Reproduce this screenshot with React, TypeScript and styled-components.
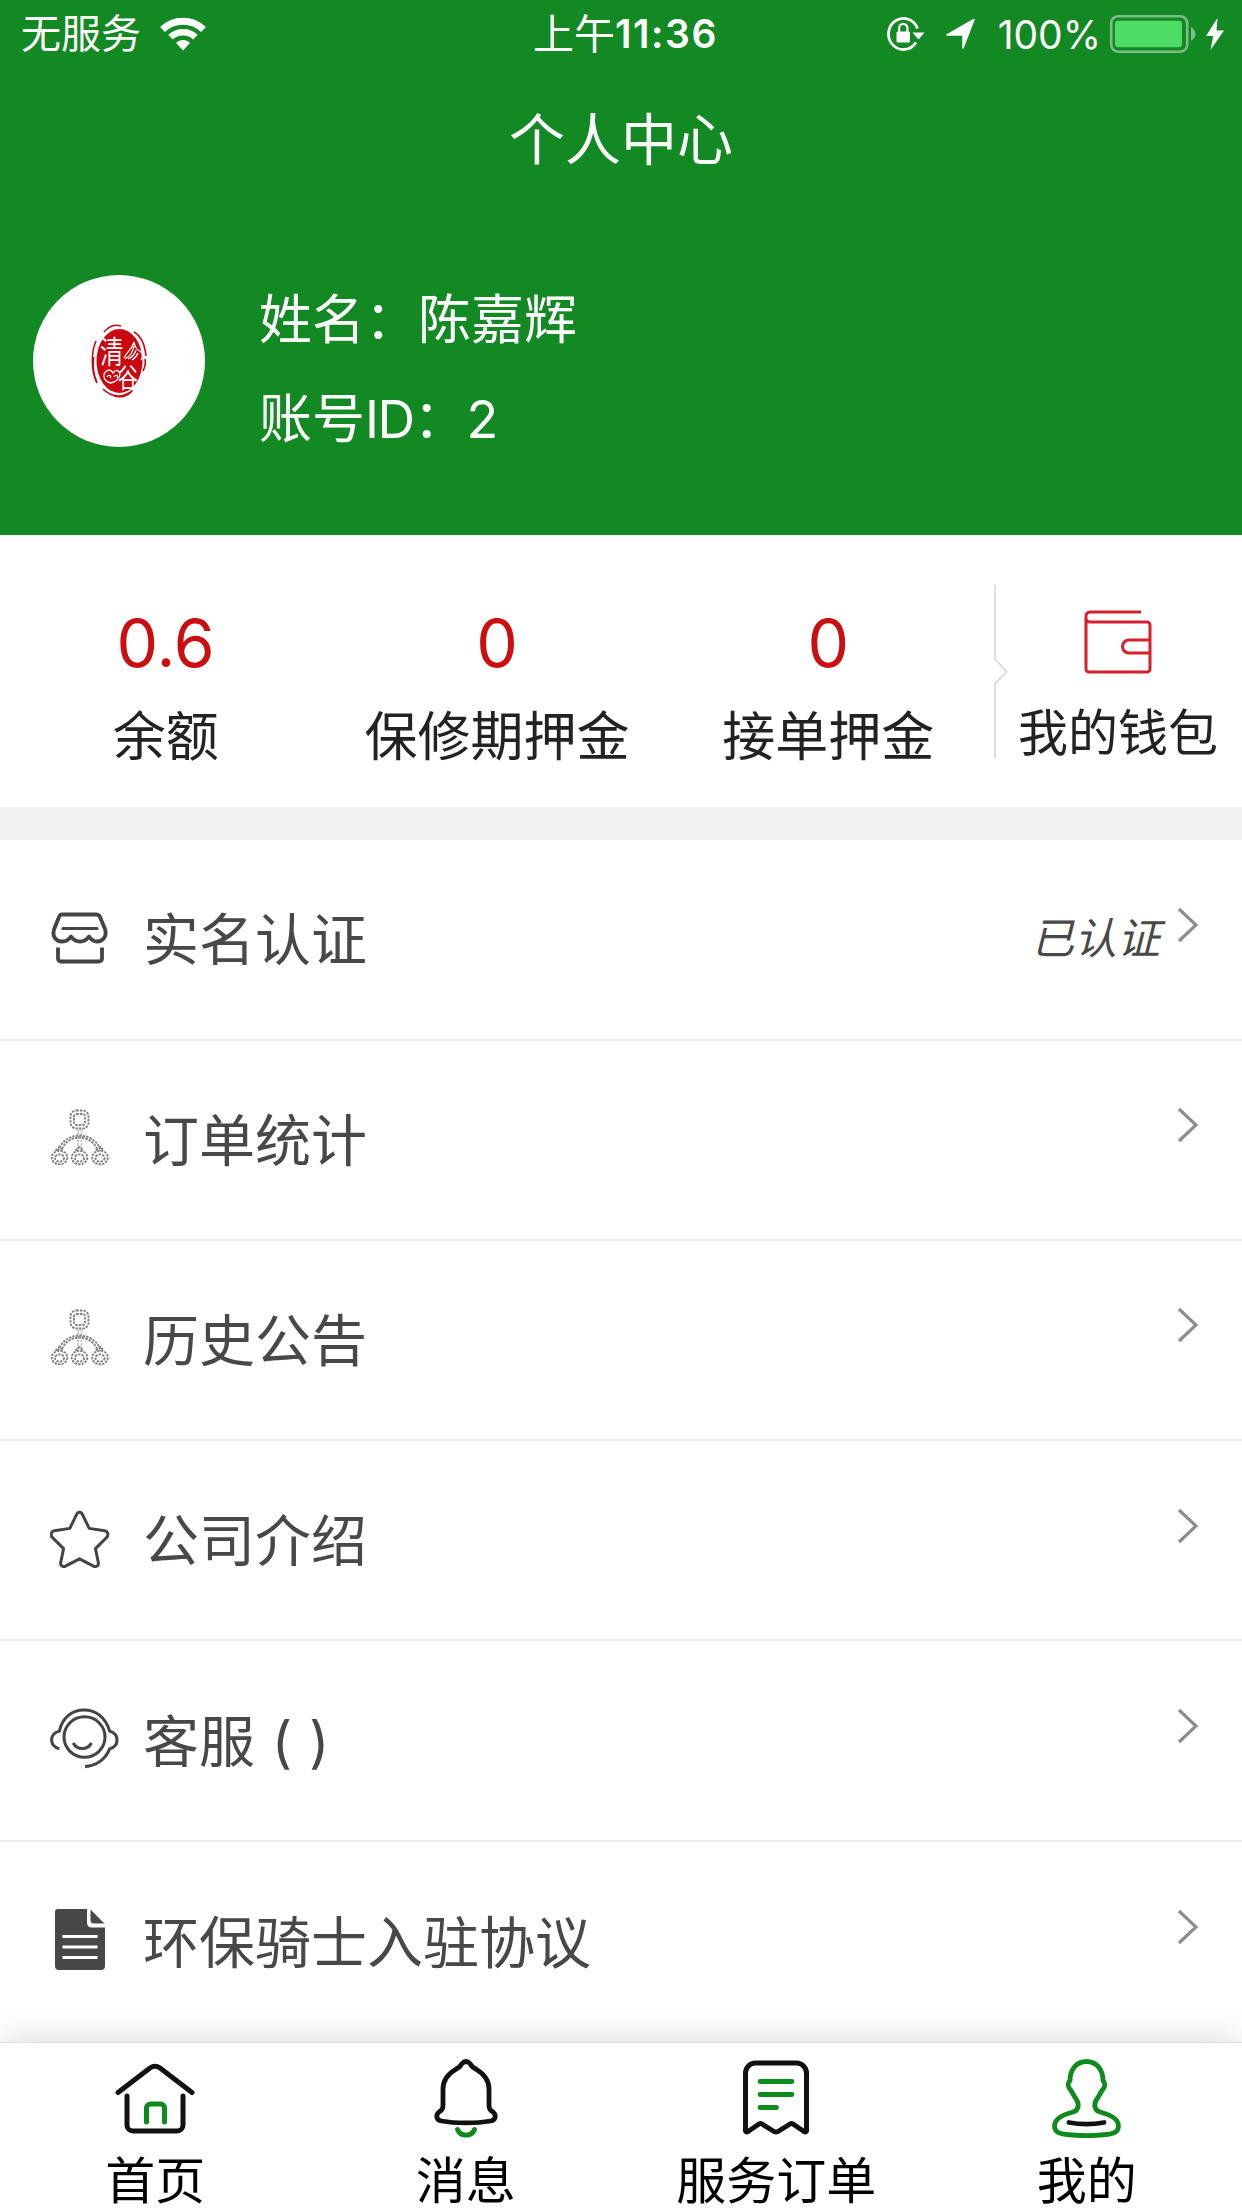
import type { ReactNode } from "react";
import styled, { createGlobalStyle } from "styled-components";

type Asset = {
  value: string;
  label: string;
};

type MenuItem = {
  icon: ReactNode;
  title: string;
  status?: string;
};

type Tab = {
  icon: ReactNode;
  label: string;
};

const GREEN = "#128922";
const TAB_GREEN = "#0f8a1c";

const WifiIcon = () => (
  <svg width="48" height="36" viewBox="0 0 48 36" fill="none" stroke="#fff">
    <path d="M3.5 13.5C15 2.4 33 2.4 44.5 13.5" strokeWidth="7" />
    <path d="M11.5 21.2C18.5 14.6 29.5 14.6 36.5 21.2" strokeWidth="6.5" />
    <path d="M17 27c4-4 10-4 14 0l-7 7.5z" fill="#fff" stroke="none" />
  </svg>
);

const LockIcon = () => (
  <svg width="40" height="36" viewBox="0 0 40 36" fill="none" stroke="#fff">
    <path d="M31.5 12.5A15 15.5 0 1 0 30 26.5" strokeWidth="2.8" />
    <path d="M26.5 16.5h12l-6 7z" fill="#fff" stroke="none" />
    <rect x="10.5" y="15.5" width="13.5" height="11" rx="1.5" fill="#fff" stroke="none" />
    <path d="M13.2 16v-4a4.1 4.1 0 0 1 8.2 0v4" strokeWidth="2.2" />
  </svg>
);

const LocationIcon = () => (
  <svg width="32" height="32" viewBox="0 0 32 32">
    <path
      d="M29 1.500L18 30V17H2z"
      fill="#fff"
      stroke="#fff"
      strokeWidth="1.500"
      strokeLinejoin="round"
    />
  </svg>
);

const BatteryIcon = () => (
  <svg width="90" height="40" viewBox="0 0 90 40">
    <rect x="2.2" y="2.2" width="76" height="35.5" rx="7" fill="none" stroke="#7fbd87" strokeWidth="2.6" />
    <rect x="6" y="6.8" width="67" height="26.5" rx="3" fill="#4fdc66" />
    <path d="M82 13c6 3.5 6 10.5 0 14z" fill="#7fbd87" />
  </svg>
);

const BoltIcon = () => (
  <svg width="20" height="34" viewBox="0 0 20 34">
    <path d="M12.5 1L1 19h7.2L5.5 33 19 13.5h-7.5z" fill="#fff" />
  </svg>
);

const SealLogo = () => (
  <svg width="58" height="76" viewBox="0 0 58 76">
    <ellipse cx="29.5" cy="38" rx="23" ry="32" fill="#cc0610" />
    <g fill="none" stroke="#cc0610" strokeWidth="1.6">
      <path d="M14 9C19 3 25 1 31 3" />
      <path d="M44 9c7 4 11 14 12 24M55 36c1 5 0 8-2 12" />
      <path d="M6 18C1 29 1 49 7 60M3.5 34c-1 10 0 18 3 24" />
      <path d="M13 66c8 8 19 10 30 1M24 73c7 2 14 0 18-5" />
    </g>
    <SealText transform="translate(10 40) scale(0.76 1)" fontSize="31">
      清
    </SealText>
    <SealText transform="translate(28 65) scale(0.74 1)" fontSize="27">
      谷
    </SealText>
    <g fill="none" stroke="#fff" strokeWidth="1.3">
      <path d="M34 35c3-7 8-8 10-16 1 6 3 8 6 9 3 2 3 6 1 9M35 36c6-3 8-7 9-13M38 36c4-2 7-5 8-9M42 37c3-2 5-4 6-7" />
      <path d="M14 51c3-5 7-5 9-1 3-4 6-3 7 1 0 5-5 8-9 9-5-1-8-4-7-9zM17 54c2-3 5-1 3 1M24 54c2-3 5-1 3 1" />
    </g>
  </svg>
);

const WalletIcon = () => (
  <svg width="68" height="66" viewBox="0 0 68 66" fill="none" stroke="#d3212d" strokeWidth="3">
    <path d="M57 3H6a4 4 0 0 0-4 4v53a3 3 0 0 0 3 3h58a3 3 0 0 0 3-3V16a3 3 0 0 0-3-3H6a4 4 0 0 1-4-4" />
    <path d="M66 31H45a6.5 6.5 0 0 0 0 13h21" />
  </svg>
);

const DividerIcon = () => (
  <svg width="14" height="174" viewBox="0 0 14 174" fill="none" stroke="#d3d3d3" strokeWidth="1.5">
    <path d="M1 0v74l11.5 12.5L1 99v74" />
  </svg>
);

const ChevronIcon = () => (
  <svg width="22" height="36" viewBox="0 0 22 36" fill="none" stroke="#8c8c8c" strokeWidth="3.1">
    <path d="M2 2l17 16L2 34" />
  </svg>
);

const ShopIcon = () => (
  <svg width="60" height="56" viewBox="0 -1.5 60 56" fill="none" stroke="#444" strokeWidth="3.8" strokeLinecap="round" strokeLinejoin="round">
    <path d="M12 3h34c2 0 3.2.8 4 2.5l5 12c2.5 8-3 12.5-8 12.5-4 0-6-2-8-5-2 3-5 5-9 5s-7-2-9-5c-2 3-5 5-9 5-6 0-10-5-8-12L9 5.500C9.500 4 10.500 3 12 3z" />
    <path d="M13 17h34" strokeWidth="3.2" />
    <path d="M8 36v11a3 3 0 0 0 3 3h38a3 3 0 0 0 3-3V36" strokeLinecap="butt" />
  </svg>
);

const ChainIcon = () => (
  <svg width="60" height="58" viewBox="0 0 60 58" fill="none" stroke="#808080" strokeWidth="1.9" strokeDasharray="2.4 1.1">
    <rect x="20.5" y="1.5" width="18" height="18" rx="6" />
    <rect x="24" y="5" width="11" height="11" rx="2.5" />
    <path d="M28 20v22M31.5 20v22" stroke="#c4c4c4" />
    <path d="M8 42c3-9 10-15 21.5-15.5C41 27 48 33 51 42M12 40c3-7 9-11 17.5-11.5C38 29 44 33 47 40" />
    {[9.5, 29.5, 50].map((x) => (
      <g key={x}>
        <ellipse cx={x} cy="48.5" rx="7.8" ry="6.8" />
        <ellipse cx={x} cy="49" rx="4.6" ry="3.6" />
        <path d={`M${x - 4} 41.5l4-3.5 4 3.5`} />
      </g>
    ))}
  </svg>
);

const StarIcon = () => (
  <svg width="60" height="58" viewBox="0 0 62 60" fill="none" stroke="#444" strokeWidth="3.1" strokeLinejoin="round">
    <path d="M27.5 4.5c1.2-3 4.8-3 6 0L40.5 19l16 2.5c3.5.7 4.5 4.5 2 7L47 40l3 14.5c.5 3.2-2.5 4.8-5 3.5l-14.5-7.5L16 58c-2.5 1.3-5.5-.3-5-3.5L14 40 2.5 28.5c-2.5-2.5-1.5-6.300 2-7L20.500 19z" />
  </svg>
);

const ServiceIcon = () => (
  <svg width="71" height="64" viewBox="0.500 0 72 64" fill="none" stroke="#444" strokeWidth="3.1">
    <ellipse cx="35.5" cy="30" rx="20.8" ry="20.5" />
    <path d="M10 42c-10-3-11-15 0-18C13 10 23 2.5 35 2.5S57 10 61 24c10 3 10 15 0 18-4 10-13 17-25 18" />
    <path d="M24 36c4 7.5 14.5 7.5 18.5 0" />
  </svg>
);

const DocIcon = () => (
  <svg width="60" height="64" viewBox="-4 0 60 64">
    <path d="M4 1h29v14a4.5 4.5 0 0 0 4.5 4.5H51V58a4 4 0 0 1-4 4H5a4 4 0 0 1-4-4V4a3 3 0 0 1 3-3z" fill="#484848" />
    <path d="M36.5 1.5L50.5 15.5H40a3.5 3.5 0 0 1-3.5-3.5z" fill="#484848" />
    <path d="M8.5 28.5h35M8.5 39h35M8.5 49.5h35" stroke="#fff" strokeWidth="3.2" />
  </svg>
);

const HomeIcon = () => (
  <svg width="80" height="80" viewBox="0 0 80 80" fill="none" stroke="#111" strokeWidth="5" strokeLinecap="round" strokeLinejoin="round">
    <path d="M3 34.500L35 10q5-3.500 10 0L77 34.500" />
    <path d="M12 38v29a6 6 0 0 0 6 6h44a6 6 0 0 0 6-6V38" />
    <path d="M31.5 64V50a4 4 0 0 1 4-4h10a4 4 0 0 1 4 4v14" stroke={TAB_GREEN} />
  </svg>
);

const BellIcon = () => (
  <svg width="80" height="80" viewBox="0 0 80 80" fill="none" stroke="#111" strokeWidth="4.8" strokeLinecap="round" strokeLinejoin="round">
    <path d="M35.5 6q4.5-5 9 0c1 3 3 4 6 5.5C58 16 63 22 63 31v16c0 4 1 5 4 7 3.5 3 3 8-2.5 9-14 2.5-35 2.5-49 0-5.5-1-6-6-2.500-9 3-2 4-3 4-7V31c0-9 5-15 12.500-19.500 3-1.500 5-2.500 6-5.500z" />
    <path d="M31.5 71.5c3 7.5 14 7.5 17 0" stroke={TAB_GREEN} />
  </svg>
);

const OrderIcon = () => (
  <svg width="80" height="80" viewBox="0 0 80 80" fill="none" stroke="#111" strokeWidth="5" strokeLinecap="round" strokeLinejoin="round">
    <path d="M9.5 73V15a10 10 0 0 1 10-10h41a10 10 0 0 1 10 10v58q-1 1.5-2.5.5L57 66q-1.5-1-3 0l-12 7.5q-2 1-4 0L26 66q-1.5-1-3 0l-11 7.5q-1.5 1-2.5-.5z" />
    <path d="M24 23.5h32M24 36.5h32M24 49.5h16.5" stroke={TAB_GREEN} strokeWidth="4.8" />
  </svg>
);

const MineIcon = () => (
  <svg width="80" height="80" viewBox="0.5 0 80 80" fill="none" stroke={TAB_GREEN} strokeWidth="4.8" strokeLinecap="round" strokeLinejoin="round">
    <path d="M40 3.5c-10 0-16.5 8-16.5 19-3 3-2 7 1 10l4 7c5 6 4 13-2 14.5C15 57 8 61 8 68c0 5 4 7.5 9 8.2 14 1.8 32 1.8 46 0 5-.7 9-3.2 9-8.2 0-7-7-11-18.5-14-6-1.500-7-8.500-2-14.500l4-7c3-3 4-7 1-10 0-11-6.500-19-16.500-19z" />
    <path d="M22.5 64.5c11 2 24 2 35 0" stroke="#111" />
  </svg>
);

const assets: Asset[] = [
  { value: "0.6", label: "余额" },
  { value: "0", label: "保修期押金" },
  { value: "0", label: "接单押金" },
];

const menu: MenuItem[] = [
  { icon: <ShopIcon />, title: "实名认证", status: "已认证" },
  { icon: <ChainIcon />, title: "订单统计" },
  { icon: <ChainIcon />, title: "历史公告" },
  { icon: <StarIcon />, title: "公司介绍" },
  { icon: <ServiceIcon />, title: "客服 ( )" },
  { icon: <DocIcon />, title: "环保骑士入驻协议" },
];

const tabs: Tab[] = [
  { icon: <HomeIcon />, label: "首页" },
  { icon: <BellIcon />, label: "消息" },
  { icon: <OrderIcon />, label: "服务订单" },
  { icon: <MineIcon />, label: "我的" },
];

const App = () => {
  return (
    <Page>
      <GlobalStyle />
      <Header>
        <StatusBar>
          <Carrier>
            无服务
            <WifiIcon />
          </Carrier>
          <Clock>
            上午<ClockDigits>11:36</ClockDigits>
          </Clock>
          <Indicators>
            <LockIcon />
            <LocationIcon />
            <Percent>100%</Percent>
            <BatteryIcon />
            <BoltIcon />
          </Indicators>
        </StatusBar>
        <Title>个人中心</Title>
        <Profile>
          <Avatar>
            <SealLogo />
          </Avatar>
          <ProfileInfo>
            <ProfileLine>姓名：陈嘉辉</ProfileLine>
            <ProfileLine>
              账号<Latin>ID</Latin>：<Latin>2</Latin>
            </ProfileLine>
          </ProfileInfo>
        </Profile>
      </Header>

      <Assets>
        {assets.map((asset) => (
          <AssetItem key={asset.label}>
            <AssetValue>{asset.value}</AssetValue>
            <AssetLabel>{asset.label}</AssetLabel>
          </AssetItem>
        ))}
        <Wallet>
          <DividerIcon />
          <WalletBody>
            <WalletIcon />
            <WalletLabel>我的钱包</WalletLabel>
          </WalletBody>
        </Wallet>
      </Assets>

      <Menu>
        {menu.map((item) => (
          <MenuRow key={item.title}>
            <MenuIcon>{item.icon}</MenuIcon>
            <MenuTitle>{item.title}</MenuTitle>
            {item.status && <MenuStatus>{item.status}</MenuStatus>}
            <MenuArrow>
              <ChevronIcon />
            </MenuArrow>
          </MenuRow>
        ))}
      </Menu>

      <TabBar>
        {tabs.map((tab) => (
          <TabItem key={tab.label}>
            {tab.icon}
            <TabLabel>{tab.label}</TabLabel>
          </TabItem>
        ))}
      </TabBar>
    </Page>
  );
};

export default App;

const GlobalStyle = createGlobalStyle`
  * {
    box-sizing: border-box;
  }
  body {
    margin: 0;
    background: #fff;
    font-family: Inter, "Noto Sans CJK SC", sans-serif;
    font-weight: 400;
  }
  svg {
    display: block;
    flex-shrink: 0;
  }
`;

const Page = styled.div`
  width: 1242px;
  height: 2208px;
  display: flex;
  flex-direction: column;
  overflow: hidden;
`;

const Header = styled.header`
  height: 536px;
  background: ${GREEN};
  color: #fff;
`;

const StatusBar = styled.div`
  height: 68px;
  padding: 0 17px 0 21px;
  display: grid;
  grid-template-columns: 1fr auto 1fr;
  align-items: center;
`;

const Carrier = styled.div`
  display: flex;
  align-items: center;
  gap: 18px;
  font-size: 40px;
  line-height: 60px;
`;

const Clock = styled.div`
  display: flex;
  align-items: center;
  margin-left: 5px;
  font-size: 41px;
  line-height: 60px;
`;

const ClockDigits = styled.span`
  font-size: 39px;
  font-weight: 600;
  letter-spacing: 1.6px;
`;

const Indicators = styled.div`
  display: flex;
  align-items: center;
  justify-content: flex-end;

  svg:first-child {
    margin-right: 19px;
  }

  svg:last-child {
    margin-left: 6px;
  }
`;

const Percent = styled.span`
  margin: 0 8px 0 21px;
  font-size: 39px;
`;

const Title = styled.h1`
  margin: 0;
  height: 142px;
  font-size: 56px;
  font-weight: 400;
  line-height: 145px;
  text-align: center;
`;

const Profile = styled.div`
  display: flex;
  align-items: flex-start;
  margin-top: 65px;
  padding-left: 33px;
`;

const Avatar = styled.div`
  width: 172px;
  height: 172px;
  display: flex;
  align-items: center;
  justify-content: center;
  border-radius: 50%;
  background: #fff;
`;

const SealText = styled.text`
  fill: #fff;
  font-family: "Noto Sans CJK SC", sans-serif;
  font-weight: 400;
`;

const ProfileInfo = styled.div`
  margin: -4px 0 0 54px;
`;

const ProfileLine = styled.p`
  margin: 0;
  font-size: 53px;
  line-height: 99px;
`;

const Latin = styled.span`
  font-size: 52px;
  letter-spacing: -1.5px;
`;

const Assets = styled.section`
  height: 305px;
  display: flex;
  border-bottom: 33px solid #f0f0f0;
`;

const AssetItem = styled.div`
  width: 331.3px;
  padding-top: 68px;
  text-align: center;
`;

const AssetValue = styled.div`
  font-size: 66px;
  line-height: 80px;
  color: #cc0e10;
`;

const AssetLabel = styled.div`
  margin-top: 15px;
  font-size: 53px;
  line-height: 78px;
  color: #222;
`;

const Wallet = styled.div`
  flex: 1;
  display: flex;
  padding-top: 50px;
`;

const WalletBody = styled.div`
  flex: 1;
  margin-left: -14px;
  padding-top: 24px;
  display: flex;
  flex-direction: column;
  align-items: center;
`;

const WalletLabel = styled.div`
  margin-top: 20px;
  font-size: 50px;
  line-height: 76px;
  color: #222;
`;

const Menu = styled.ul`
  flex: 1;
  margin: 0;
  padding: 0;
  list-style: none;
`;

const MenuRow = styled.li`
  height: 200.3px;
  display: flex;
  align-items: center;
  padding: 2px 43px 0 50px;
  border-bottom: 2px solid #eee;
  color: #484848;

  &:last-child {
    border-bottom: none;
  }
`;

const MenuIcon = styled.div`
  width: 93px;
  padding-bottom: 5px;
`;

const MenuTitle = styled.span`
  flex: 1;
  font-size: 56px;
  line-height: 80px;
  word-spacing: 1px;
`;

const MenuStatus = styled.em`
  margin-right: 17px;
  padding-bottom: 4px;
  font-size: 43px;
  line-height: 64px;
`;

const MenuArrow = styled.div`
  padding-bottom: 31px;
`;

const TabBar = styled.nav`
  position: relative;
  height: 166px;
  display: flex;
  background: #fff;
  border-top: 1px solid #ddd;
  box-shadow: 0 0 36px rgba(0, 0, 0, 0.16);
`;

const TabItem = styled.div`
  flex: 1;
  display: flex;
  flex-direction: column;
  align-items: center;
  padding-top: 15px;
`;

const TabLabel = styled.span`
  margin-top: 16px;
  font-size: 50px;
  line-height: 54px;
  color: #000;
`;
